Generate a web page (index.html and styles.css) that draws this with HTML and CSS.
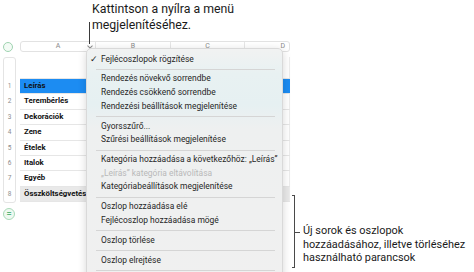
FILE: index.html
```html
<!DOCTYPE html>
<html lang="hu">
<head>
<meta charset="utf-8">
<link rel="stylesheet" href="styles.css">
</head>
<body>
<div class="sheet">
  <div class="colbar">
    <div class="corner"><span class="ring"></span></div>
    <div class="colheads">
      <div class="colhead">A<span class="chev"></span></div>
      <div class="colhead">B</div>
      <div class="colhead">C</div>
      <div class="colhead last">D</div>
    </div>
  </div>
  <div class="tbody">
    <div class="rownums">
      <div class="rn head"></div>
      <div class="rn">1</div>
      <div class="rn">2</div>
      <div class="rn">3</div>
      <div class="rn">4</div>
      <div class="rn">5</div>
      <div class="rn">6</div>
      <div class="rn">7</div>
      <div class="rn last">8</div>
    </div>
    <div class="cells">
      <div class="row head"><div class="c"></div><div class="c"></div><div class="c"></div><div class="c"></div></div>
      <div class="row sel"><div class="c">Leírás</div><div class="c"></div><div class="c"></div><div class="c"></div></div>
      <div class="row"><div class="c">Terembérlés</div><div class="c"></div><div class="c"></div><div class="c"></div></div>
      <div class="row"><div class="c">Dekorációk</div><div class="c"></div><div class="c"></div><div class="c"></div></div>
      <div class="row"><div class="c">Zene</div><div class="c"></div><div class="c"></div><div class="c"></div></div>
      <div class="row"><div class="c">Ételek</div><div class="c"></div><div class="c"></div><div class="c"></div></div>
      <div class="row"><div class="c">Italok</div><div class="c"></div><div class="c"></div><div class="c"></div></div>
      <div class="row"><div class="c">Egyéb</div><div class="c"></div><div class="c"></div><div class="c"></div></div>
      <div class="row foot"><div class="c">Összköltségvetés</div><div class="c"></div><div class="c"></div><div class="c"></div></div>
    </div>
  </div>
  <div class="addrow"><span class="eq">=</span></div>
</div>

<div class="callout-top">Kattintson a nyílra a menü<br>megjelenítéséhez.</div>
<div class="leader"></div>

<div class="menu">
  <div class="item check"><span class="tick">✓</span>Fejlécoszlopok rögzítése</div>
  <div class="sep"></div>
  <div class="item">Rendezés növekvő sorrendbe</div>
  <div class="item">Rendezés csökkenő sorrendbe</div>
  <div class="item">Rendezési beállítások megjelenítése</div>
  <div class="sep"></div>
  <div class="item">Gyorsszűrő...</div>
  <div class="item">Szűrési beállítások megjelenítése</div>
  <div class="sep"></div>
  <div class="item">Kategória hozzáadása a következőhöz: „Leírás”</div>
  <div class="item off">„Leírás” kategória eltávolítása</div>
  <div class="item">Kategóriabeállítások megjelenítése</div>
  <div class="sep"></div>
  <div class="item">Oszlop hozzáadása elé</div>
  <div class="item">Fejlécoszlop hozzáadása mögé</div>
  <div class="sep"></div>
  <div class="item">Oszlop törlése</div>
  <div class="sep"></div>
  <div class="item">Oszlop elrejtése</div>
  <div class="sep"></div>
</div>

<div class="bracket"><span class="tick-mid"></span></div>
<div class="callout-right">Új sorok és oszlopok<br>hozzáadásához, illetve törléséhez<br>használható parancsok</div>
</body>
</html>
```
FILE: styles.css
```css
html, body {
  margin: 0;
  padding: 0;
}
body {
  width: 474px;
  height: 272px;
  overflow: hidden;
  position: relative;
  background: #ffffff;
  font-family: Roboto, "Liberation Sans", Arial, sans-serif;
  color: #1d1d1f;
}

/* spreadsheet */
.sheet {
  padding-top: 41px;
}
.colbar {
  display: flex;
  height: 11px;
}
.corner {
  width: 20px;
  display: flex;
  align-items: center;
  justify-content: center;
  margin-left: -2px;
  margin-right: 2px;
}
.ring {
  width: 10px;
  height: 10px;
  border-radius: 50%;
  border: 1px solid #9fd3b0;
  background: #f3fbf5;
  box-sizing: border-box;
}
.colheads {
  display: grid;
  grid-template-columns: 75px 75px 74px 46px;
  border: 1px solid #e2e2e2;
  border-radius: 3px;
  box-sizing: border-box;
  height: 11px;
  width: 270px;
}
.colhead {
  position: relative;
  font-size: 7px;
  line-height: 9px;
  color: #8a8a8a;
  text-align: center;
  border-right: 1px solid #e6e6e6;
}
.colhead.last {
  border-right: none;
  text-align: right;
  padding-right: 6px;
}
.chev {
  position: absolute;
  right: 3px;
  top: 2px;
  width: 3px;
  height: 3px;
  border-right: 1px solid #8a8a8a;
  border-bottom: 1px solid #8a8a8a;
  transform: rotate(45deg);
}

.tbody {
  display: flex;
  margin-top: 5px;
}
.rownums {
  margin-left: 3px;
  width: 13px;
  border: 1px solid #e4e4e4;
  border-radius: 3px;
  box-sizing: border-box;
}
.rn {
  height: 15.4px;
  font-size: 6.5px;
  line-height: 15.4px;
  color: #8c8c8c;
  text-align: center;
}
.rn.head {
  height: 21px;
}
.cells {
  margin-left: 4px;
  width: 270px;
}
.row {
  display: grid;
  grid-template-columns: 75px 75px 74px 46px;
  height: 15.4px;
  border-bottom: 1px solid #e6e6e6;
  box-sizing: border-box;
}
.row.head {
  height: 22px;
}
.c {
  font-size: 7.8px;
  font-weight: bold;
  line-height: 14px;
  padding-left: 4px;
  white-space: nowrap;
  overflow: hidden;
  border-right: 1px solid #ececec;
  color: #111;
}
.row.sel {
  background: #1c8cf2;
}
.row.sel .c {
  border-right-color: #1c8cf2;
}
.row.foot {
  background: #e9e9e9;
}
.addrow {
  margin-top: 5px;
  width: 18px;
  display: flex;
  justify-content: center;
}
.eq {
  width: 12px;
  height: 12px;
  border-radius: 50%;
  border: 1px solid #a9d9b8;
  background: #eef9f1;
  box-sizing: border-box;
  color: #55b679;
  font-size: 9px;
  line-height: 10px;
  text-align: center;
  font-weight: bold;
}

/* callouts */
.callout-top {
  position: absolute;
  left: 92px;
  top: 2px;
  font-size: 12.3px;
  line-height: 15.5px;
  color: #1a1a1a;
  white-space: nowrap;
}
.leader {
  position: absolute;
  left: 89px;
  top: 22px;
  width: 1px;
  height: 22px;
  background: #3a3a3a;
}
.callout-right {
  position: absolute;
  left: 303px;
  top: 224px;
  font-size: 10.9px;
  line-height: 13.6px;
  color: #1a1a1a;
  white-space: nowrap;
}
.bracket {
  position: absolute;
  left: 292px;
  top: 195px;
  width: 2px;
  height: 71px;
  border: 1px solid #4a4a4a;
  border-left: none;
}
.tick-mid {
  position: absolute;
  left: 2px;
  top: 36px;
  width: 6px;
  height: 1px;
  background: #4a4a4a;
}

/* menu */
.menu {
  position: absolute;
  left: 86px;
  top: 48px;
  width: 197px;
  height: 240px;
  padding-top: 3.5px;
  box-sizing: border-box;
  border-radius: 5px;
  border: 1px solid #d9d9d9;
  background: linear-gradient(180deg, #f1f2f2 0px, #e8f1f2 25px, #e6f0f2 55px, #eef0f0 80px, #f0f0f0 100%);
  box-shadow: 0 2px 8px rgba(0, 0, 0, 0.16);
  font-size: 8.45px;
  color: #262626;
}
.item {
  position: relative;
  height: 13.6px;
  line-height: 13.6px;
  padding-left: 14px;
  white-space: nowrap;
}
.tick {
  position: absolute;
  left: 3px;
  top: 0;
  font-size: 9px;
}
.item.off {
  color: #b9b9b9;
}
.sep {
  height: 1px;
  margin: 2.7px 7px 2.7px 9px;
  background: #d5d5d5;
}
```
